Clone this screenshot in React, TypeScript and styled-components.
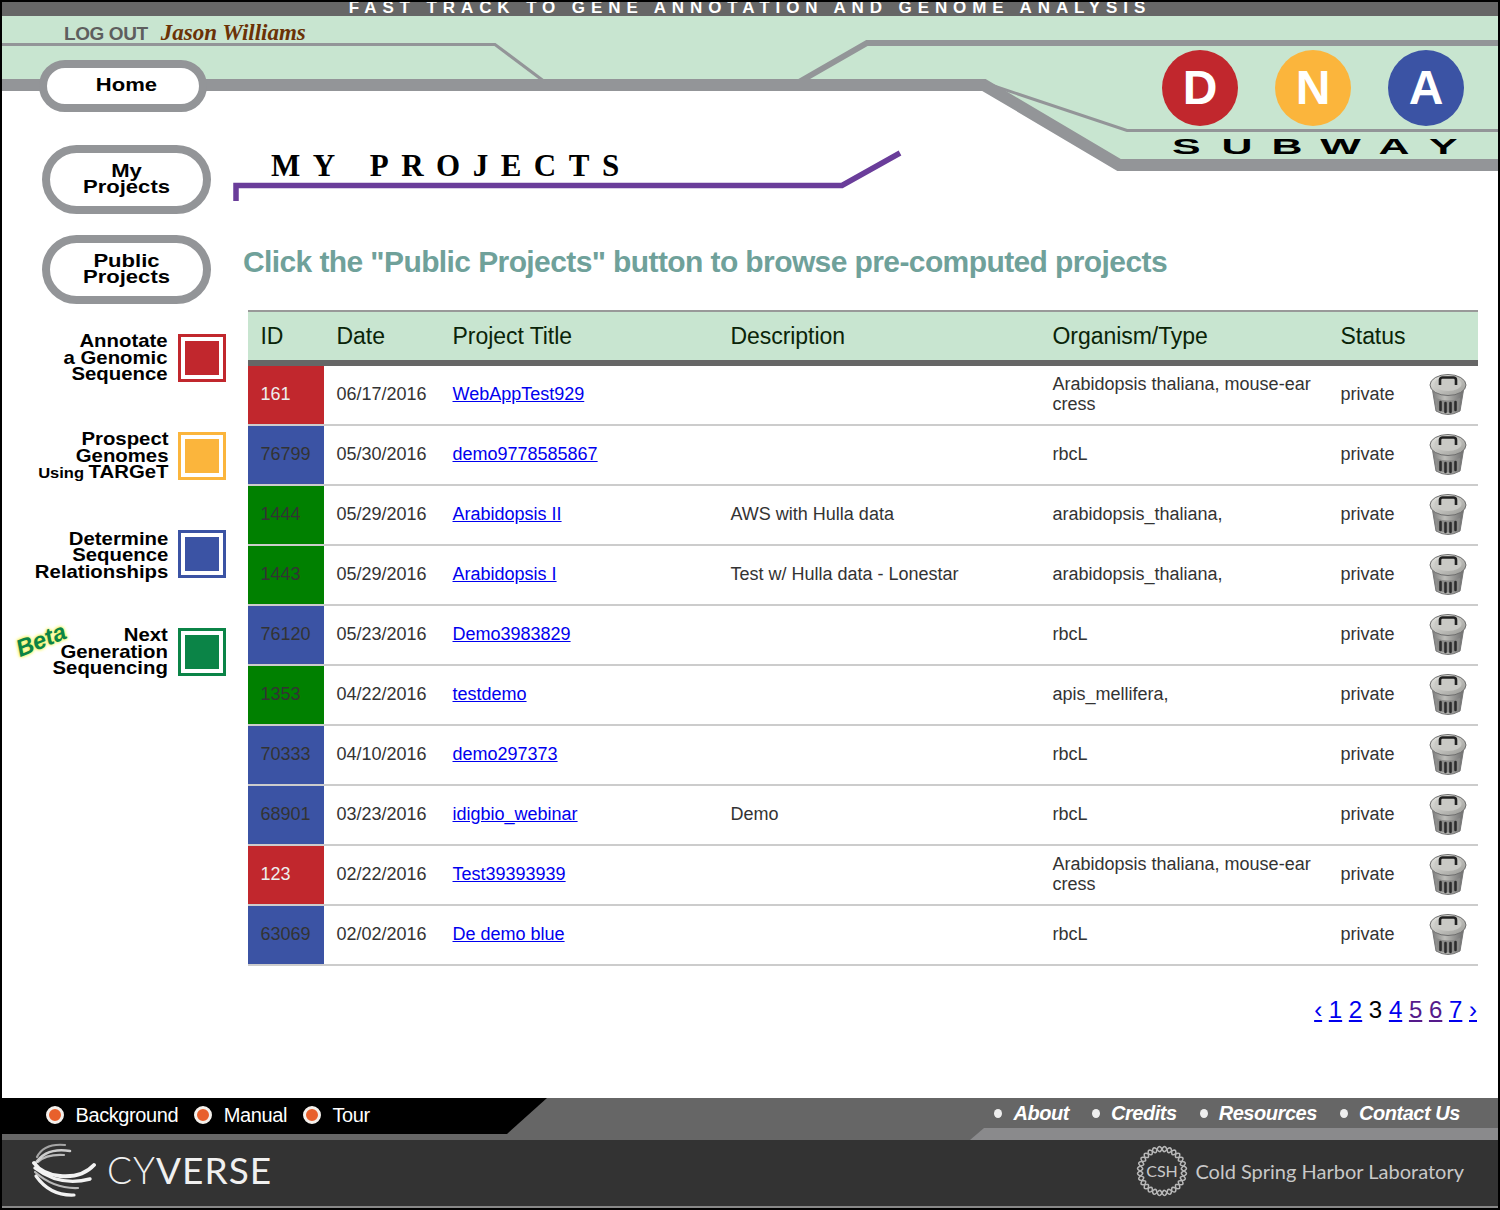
import React from 'react'
import styled, { createGlobalStyle } from 'styled-components'

const rows = [
    { id: '161', color: 'red', date: '06/17/2016', title: 'WebAppTest929', description: '', organism: 'Arabidopsis thaliana, mouse-ear cress' },
    { id: '76799', color: 'blue', date: '05/30/2016', title: 'demo9778585867', description: '', organism: 'rbcL' },
    { id: '1444', color: 'green', date: '05/29/2016', title: 'Arabidopsis II', description: 'AWS with Hulla data', organism: 'arabidopsis_thaliana,' },
    { id: '1443', color: 'green', date: '05/29/2016', title: 'Arabidopsis I', description: 'Test w/ Hulla data - Lonestar', organism: 'arabidopsis_thaliana,' },
    { id: '76120', color: 'blue', date: '05/23/2016', title: 'Demo3983829', description: '', organism: 'rbcL' },
    { id: '1353', color: 'green', date: '04/22/2016', title: 'testdemo', description: '', organism: 'apis_mellifera,' },
    { id: '70333', color: 'blue', date: '04/10/2016', title: 'demo297373', description: '', organism: 'rbcL' },
    { id: '68901', color: 'blue', date: '03/23/2016', title: 'idigbio_webinar', description: 'Demo', organism: 'rbcL' },
    { id: '123', color: 'red', date: '02/22/2016', title: 'Test39393939', description: '', organism: 'Arabidopsis thaliana, mouse-ear cress' },
    { id: '63069', color: 'blue', date: '02/02/2016', title: 'De demo blue', description: '', organism: 'rbcL' }
]

const idColors: Record<string, string> = { red: '#c1272d', blue: '#3b53a4', green: '#008000' }

const pipelines = [
    { color: '#c1272d', nudge: 0, lines: ['Annotate', 'a Genomic', 'Sequence'] },
    { color: '#fbb53c', nudge: 1, lines: ['Prospect', 'Genomes', 'TARGeT'] },
    { color: '#3b53a4', nudge: 3, lines: ['Determine', 'Sequence', 'Relationships'] },
    { color: '#0b8447', nudge: 0, lines: ['Next', 'Generation', 'Sequencing'] }
]

const helix = (sign: number) => {
    let d = ''
    for (let i = 0; i <= 180; i++) {
        const a = (i / 180) * Math.PI * 2
        const r = 22 + sign * 2.6 * Math.sin(a * 14)
        d += `${i ? 'L' : 'M'}${(26 + r * Math.cos(a)).toFixed(2)} ${(26 + r * Math.sin(a)).toFixed(2)}`
    }
    return d + 'Z'
}

const TrashIcon = () => (
    <svg width="38" height="44" viewBox="0 0 38 44">
        <defs>
            <linearGradient id="trashBody" x1="0" x2="1" y1="0" y2="0">
                <stop offset="0" stopColor="#7a7a7a" />
                <stop offset="0.4" stopColor="#bdbdb9" />
                <stop offset="1" stopColor="#6c6c6c" />
            </linearGradient>
            <linearGradient id="trashLid" x1="0" x2="1" y1="0" y2="1">
                <stop offset="0" stopColor="#e8e8e4" />
                <stop offset="1" stopColor="#9a9a96" />
            </linearGradient>
        </defs>
        <path d="M3 14 L7 38 Q19 45 31 38 L35 14 Z" fill="url(#trashBody)" stroke="#777" />
        <path d="M7 25 Q19 30 31 25 L29.5 37 Q19 42 8.5 37 Z" fill="#8c8c8a" />
        <path d="M11.5 29 V37 M16.5 30 V39 M21.5 30 V39 M26.5 29 V37" stroke="#2c2c2c" strokeWidth="2.6" strokeLinecap="round" />
        <ellipse cx="19" cy="12" rx="18" ry="10.5" fill="url(#trashLid)" stroke="#6e6e6e" />
        <ellipse cx="19" cy="11" rx="13.5" ry="7" fill="#c9c9c5" />
        <path d="M11 12 V7 Q11 4.5 13.5 4.5 H24.5 Q27 4.5 27 7 V12" fill="none" stroke="#222" strokeWidth="2.6" />
    </svg>
)

const CyverseMark = () => (
    <svg width="66" height="58" viewBox="0 0 66 58">
        <g fill="none" stroke="#f2f2f2" strokeLinecap="round">
            <path d="M33 3 Q12 1 5 15" strokeWidth="2.2" opacity="0.6" />
            <path d="M38 9 Q14 5 3 22" strokeWidth="2.6" opacity="0.8" />
            <path d="M32 13 Q14 12 6 20" strokeWidth="2.2" opacity="0.7" />
            <path d="M62 23 Q50 36 28 34 Q10 32 2 21" strokeWidth="3.8" />
            <path d="M58 37 Q28 45 3 26" strokeWidth="3.4" />
            <path d="M42 53 Q18 54 4 34" strokeWidth="3.2" />
            <path d="M46 46 Q22 47 3 30" strokeWidth="2.2" opacity="0.7" />
        </g>
    </svg>
)

const CshMark = () => (
    <svg width="52" height="52" viewBox="0 0 52 52">
        <path d={helix(1)} fill="none" stroke="#b8b8b8" strokeWidth="1.5" />
        <path d={helix(-1)} fill="none" stroke="#b8b8b8" strokeWidth="1.5" />
        <CshText x="26" y="31.5" textAnchor="middle">CSH</CshText>
    </svg>
)

const App: React.FunctionComponent = () => (
    <Page>
        <GlobalStyle />
        <Tracks width="1500" height="180" viewBox="0 0 1500 180">
            <path d="M0 16 H1500 V165 H1120 L985 85 H0 Z" fill="#c8e5d0" />
            <path d="M0 44.5 H495 L545 82" fill="none" stroke="#939598" strokeWidth="3" />
            <path d="M799 82 L867 43 H1500" fill="none" stroke="#939598" strokeWidth="6" />
            <path d="M985 83 L1127 130.5 H1500" fill="none" stroke="#939598" strokeWidth="3" />
            <path d="M0 85 H984 L1119 165 H1500" fill="none" stroke="#939598" strokeWidth="12" />
        </Tracks>
        <TopBar>FAST TRACK TO GENE ANNOTATION AND GENOME ANALYSIS</TopBar>
        <Masthead>
            <LogOut>LOG OUT</LogOut>
            <UserName>Jason Williams</UserName>
        </Masthead>
        <Logo>
            <Stops>
                <Stop $color="#c1272d">D</Stop>
                <Stop $color="#fbb53c">N</Stop>
                <Stop $color="#3b53a4">A</Stop>
            </Stops>
            <LogoWord>
                {'SUBWAY'.split('').map(letter => <span key={letter}>{letter}</span>)}
            </LogoWord>
        </Logo>
        <Body>
            <Sidebar>
                <HomePill><PillLabel $shift={3}>Home</PillLabel></HomePill>
                <NavPill $top={33}><PillLabel $shift={0}>My<br />Projects</PillLabel></NavPill>
                <NavPill $top={21}><PillLabel $shift={0}>Public<br />Projects</PillLabel></NavPill>
                <Pipelines>
                    {pipelines.map((pipeline, index) => (
                        <Pipeline key={pipeline.color}>
                            {index === 3 && <Beta>Beta</Beta>}
                            <PipelineLabel $nudge={pipeline.nudge}>
                                {pipeline.lines.map(line => (
                                    <div key={line}>
                                        {line === 'TARGeT' && <small>Using </small>}
                                        {line}
                                    </div>
                                ))}
                            </PipelineLabel>
                            <PipelineSquare $color={pipeline.color}><i /></PipelineSquare>
                        </Pipeline>
                    ))}
                </Pipelines>
            </Sidebar>
            <Main>
                <TitleBlock>
                    <TitleLine width="680" height="58" viewBox="0 0 680 58">
                        <path d="M3 58 V42.5 H609 L667 10" fill="none" stroke="#6a3d9a" strokeWidth="5.5" />
                    </TitleLine>
                    <PageTitle>MY PROJECTS</PageTitle>
                </TitleBlock>
                <Hint>Click the "Public Projects" button to browse pre-computed projects</Hint>
                <Table>
                    <colgroup>
                        <col width="76" />
                        <col width="116" />
                        <col width="278" />
                        <col width="322" />
                        <col width="288" />
                        <col width="90" />
                        <col width="60" />
                    </colgroup>
                    <thead>
                        <tr>
                            <Th>ID</Th>
                            <Th>Date</Th>
                            <Th>Project Title</Th>
                            <Th>Description</Th>
                            <Th>Organism/Type</Th>
                            <Th>Status</Th>
                            <Th />
                        </tr>
                    </thead>
                    <tbody>
                        {rows.map(row => (
                            <tr key={row.id}>
                                <IdCell $color={row.color}>{row.id}</IdCell>
                                <Td>{row.date}</Td>
                                <Td><a href="#">{row.title}</a></Td>
                                <Td>{row.description}</Td>
                                <Td>{row.organism}</Td>
                                <Td>private</Td>
                                <TrashCell><TrashIcon /></TrashCell>
                            </tr>
                        ))}
                    </tbody>
                </Table>
                <Pager>
                    <a href="#">‹</a> <a href="#">1</a> <a href="#">2</a> 3 <a href="#">4</a>{' '}
                    <Visited href="#">5</Visited> <Visited href="#">6</Visited> <a href="#">7</a> <a href="#">›</a>
                </Pager>
            </Main>
        </Body>
        <Footer>
            <FooterNav>
                <HelpLinks>
                    <HelpLink>Background</HelpLink>
                    <HelpLink>Manual</HelpLink>
                    <HelpLink>Tour</HelpLink>
                </HelpLinks>
                <InfoLinks>
                    <InfoLink>About</InfoLink>
                    <InfoLink>Credits</InfoLink>
                    <InfoLink>Resources</InfoLink>
                    <InfoLink>Contact Us</InfoLink>
                </InfoLinks>
            </FooterNav>
            <FooterBar>
                <Cyverse>
                    <CyverseMark />
                    <CyverseName><span>CY</span>VERSE</CyverseName>
                </Cyverse>
                <Csh>
                    <CshMark />
                    Cold Spring Harbor Laboratory
                </Csh>
            </FooterBar>
        </Footer>
    </Page>
)

export default App

const GlobalStyle = createGlobalStyle`
    html, body {
        margin: 0;
        padding: 0;
        background: #fff;
        font-family: "Liberation Sans", Arial, sans-serif;
    }
`

const Page = styled.div`
    position: relative;
    width: 1500px;
    height: 1210px;
    display: flex;
    flex-direction: column;
    overflow: hidden;
    background: #fff;
    &::after {
        content: '';
        position: absolute;
        inset: 0;
        border: 2px solid #000;
        pointer-events: none;
    }
`

const Tracks = styled.svg`
    position: absolute;
    top: 0;
    left: 0;
`

const TopBar = styled.div`
    position: relative;
    height: 16px;
    flex: none;
    overflow: hidden;
    background: #666;
    color: #fff;
    font-size: 17px;
    font-weight: bold;
    line-height: 16px;
    letter-spacing: 5.9px;
    text-align: center;
`

const Masthead = styled.div`
    position: relative;
    height: 44px;
    flex: none;
    box-sizing: border-box;
    padding: 4px 0 0 64px;
    display: flex;
    align-items: baseline;
    gap: 13px;
`

const LogOut = styled.span`
    color: #5e5e5e;
    font-size: 19px;
    font-weight: bold;
    letter-spacing: -0.4px;
`

const UserName = styled.span`
    color: #6b3206;
    font-family: "Liberation Serif", serif;
    font-size: 23px;
    font-style: italic;
    font-weight: bold;
`

const Logo = styled.div`
    position: absolute;
    top: 50px;
    left: 1162px;
    width: 302px;
`

const Stops = styled.div`
    display: flex;
    justify-content: space-between;
`

const Stop = styled.div<{ $color: string }>`
    width: 76px;
    height: 76px;
    border-radius: 50%;
    background: ${props => props.$color};
    color: #fff;
    font-size: 48px;
    font-weight: bold;
    line-height: 76px;
    text-align: center;
`

const LogoWord = styled.div`
    display: flex;
    justify-content: space-between;
    margin: 10px 13px 0 17px;
    color: #000;
    font-size: 22px;
    font-weight: bold;
    line-height: 22px;
    span {
        transform: scaleX(1.95);
    }
`

const Body = styled.div`
    position: relative;
    flex: 1;
    display: grid;
    grid-template-columns: 233px 1fr;
`

const Sidebar = styled.div`
    display: flex;
    flex-direction: column;
    align-items: flex-start;
`

const Pill = styled.div`
    box-sizing: border-box;
    background: #fff;
    border: 8px solid #939598;
    color: #000;
    font-weight: bold;
    text-align: center;
    display: flex;
    align-items: center;
    justify-content: center;
    font-size: 19px;
    line-height: 16px;
`

const PillLabel = styled.span<{ $shift: number }>`
    margin: -2px 0 0 ${props => props.$shift * 2}px;
    transform: scaleX(1.16);
`

const HomePill = styled(Pill)`
    width: 168px;
    height: 52px;
    margin-left: 39px;
    border-radius: 26px;
    span {
        margin-top: -3px;
    }
`

const NavPill = styled(Pill)<{ $top: number }>`
    width: 169px;
    height: 69px;
    margin: ${props => props.$top}px 0 0 42px;
    border-radius: 35px;
`

const Pipelines = styled.div`
    margin-top: 30px;
    width: 226px;
    display: flex;
    flex-direction: column;
    gap: 50px;
`

const Pipeline = styled.div`
    position: relative;
    height: 48px;
    display: flex;
    justify-content: flex-end;
    align-items: center;
    gap: 10px;
`

const PipelineLabel = styled.div<{ $nudge: number }>`
    padding-top: ${props => props.$nudge}px;
    color: #000;
    font-size: 18.5px;
    font-weight: bold;
    line-height: 16.5px;
    text-align: right;
    transform: scaleX(1.1);
    transform-origin: right center;
    small {
        font-size: 15px;
    }
`

const PipelineSquare = styled.div<{ $color: string }>`
    box-sizing: border-box;
    width: 48px;
    height: 48px;
    padding: 4px;
    border: 3px solid ${props => props.$color};
    i {
        display: block;
        width: 100%;
        height: 100%;
        background: ${props => props.$color};
    }
`

const Beta = styled.span`
    position: absolute;
    left: 15px;
    top: -3px;
    color: #0b8447;
    font-size: 24px;
    font-style: italic;
    font-weight: bold;
    line-height: 30px;
    text-shadow: 0 0 4px #f2f24a, 0 0 3px #f2f24a;
    transform: rotate(-22deg);
`

const Main = styled.div`
    padding: 83px 22px 0 0;
    display: flex;
    flex-direction: column;
`

const TitleBlock = styled.div`
    position: relative;
    height: 58px;
    padding-left: 38px;
`

const TitleLine = styled.svg`
    position: absolute;
    left: 0;
    top: 0;
`

const PageTitle = styled.h1`
    position: relative;
    margin: 7px 0 0;
    color: #000;
    font-family: "Liberation Serif", serif;
    font-size: 31px;
    font-weight: bold;
    line-height: 32px;
    letter-spacing: 12.5px;
    word-spacing: 3px;
`

const Hint = styled.h2`
    margin: 43px 0 0 10px;
    color: #6fa19a;
    font-size: 30px;
    font-weight: bold;
    line-height: 36px;
    letter-spacing: -0.6px;
    white-space: nowrap;
`

const Table = styled.table`
    width: 1230px;
    margin: 30px 0 0 15px;
    border-collapse: separate;
    border-spacing: 0;
    table-layout: fixed;
`

const Th = styled.th`
    box-sizing: border-box;
    height: 56px;
    padding: 0 12.5px;
    background: #c8e5d0;
    border-top: 2px solid #999;
    border-bottom: 6px solid #666;
    color: #0a2408;
    font-size: 23px;
    font-weight: normal;
    letter-spacing: -0.05px;
    text-align: left;
`

const Td = styled.td`
    box-sizing: border-box;
    height: 60px;
    padding: 0 12px 2px 12.5px;
    border-bottom: 2px solid #ccc;
    color: #333;
    font-size: 18px;
    line-height: 20px;
    a {
        color: #00e;
    }
`

const IdCell = styled(Td)<{ $color: string }>`
    background: ${props => idColors[props.$color]};
    color: ${props => (props.$color === 'red' ? '#eee' : '#333')};
`

const TrashCell = styled(Td)`
    padding: 0 0 0 11px;
    svg {
        display: block;
    }
`

const Pager = styled.div`
    margin: 30px 1px 0 0;
    color: #000;
    font-size: 24px;
    line-height: 28px;
    text-align: right;
    a {
        color: #00e;
    }
`

const Visited = styled.a`
    && {
        color: #551a8b;
    }
`

const Footer = styled.div`
    flex: none;
    padding-bottom: 2px;
    background: #333;
`

const FooterNav = styled.div`
    position: relative;
    height: 42px;
    display: flex;
    justify-content: space-between;
    background: #666;
    &::after {
        content: '';
        position: absolute;
        right: 0;
        bottom: 0;
        width: 530px;
        height: 12px;
        background: #8a8a8c;
        clip-path: polygon(14px 0, 100% 0, 100% 100%, 0 100%);
    }
`

const HelpLinks = styled.div`
    width: 547px;
    height: 36px;
    box-sizing: border-box;
    padding: 0 0 2px 46px;
    display: flex;
    align-items: center;
    gap: 16px;
    background: #000;
    clip-path: polygon(0 0, 100% 0, 507px 100%, 0 100%);
`

const HelpLink = styled.span`
    display: flex;
    align-items: center;
    gap: 11.5px;
    color: #fff;
    font-size: 20px;
    letter-spacing: -0.4px;
    &::before {
        content: '';
        box-sizing: border-box;
        width: 18px;
        height: 18px;
        border: 3px solid #f4f0ec;
        border-radius: 50%;
        background: #e8602c;
    }
`

const InfoLinks = styled.div`
    position: relative;
    z-index: 1;
    height: 30px;
    padding-right: 40px;
    display: flex;
    align-items: center;
    gap: 23px;
`

const InfoLink = styled.span`
    display: flex;
    align-items: center;
    gap: 11px;
    color: #fff;
    font-size: 20px;
    font-style: italic;
    font-weight: bold;
    letter-spacing: -0.45px;
    &::before {
        content: '';
        width: 8px;
        height: 9px;
        border-radius: 50%;
        background: #eee;
    }
`

const FooterBar = styled.div`
    box-sizing: border-box;
    height: 68px;
    padding: 0 36px 4px 32px;
    display: flex;
    align-items: center;
    justify-content: space-between;
    background: #333;
    border-bottom: 2px solid #888;
`

const Cyverse = styled.div`
    display: flex;
    align-items: center;
    gap: 9px;
`

const CyverseName = styled.div`
    margin-top: -4px;
    color: #f0f0f0;
    font-family: Lato, "Open Sans", sans-serif;
    font-size: 37px;
    letter-spacing: 1px;
    span {
        font-weight: 300;
    }
`

const Csh = styled.div`
    display: flex;
    align-items: center;
    gap: 7px;
    color: #c8c8c8;
    font-family: Lato, sans-serif;
    font-size: 20px;
`

const CshText = styled.text`
    fill: #c8c8c8;
    font-family: Lato, sans-serif;
    font-size: 16px;
`
